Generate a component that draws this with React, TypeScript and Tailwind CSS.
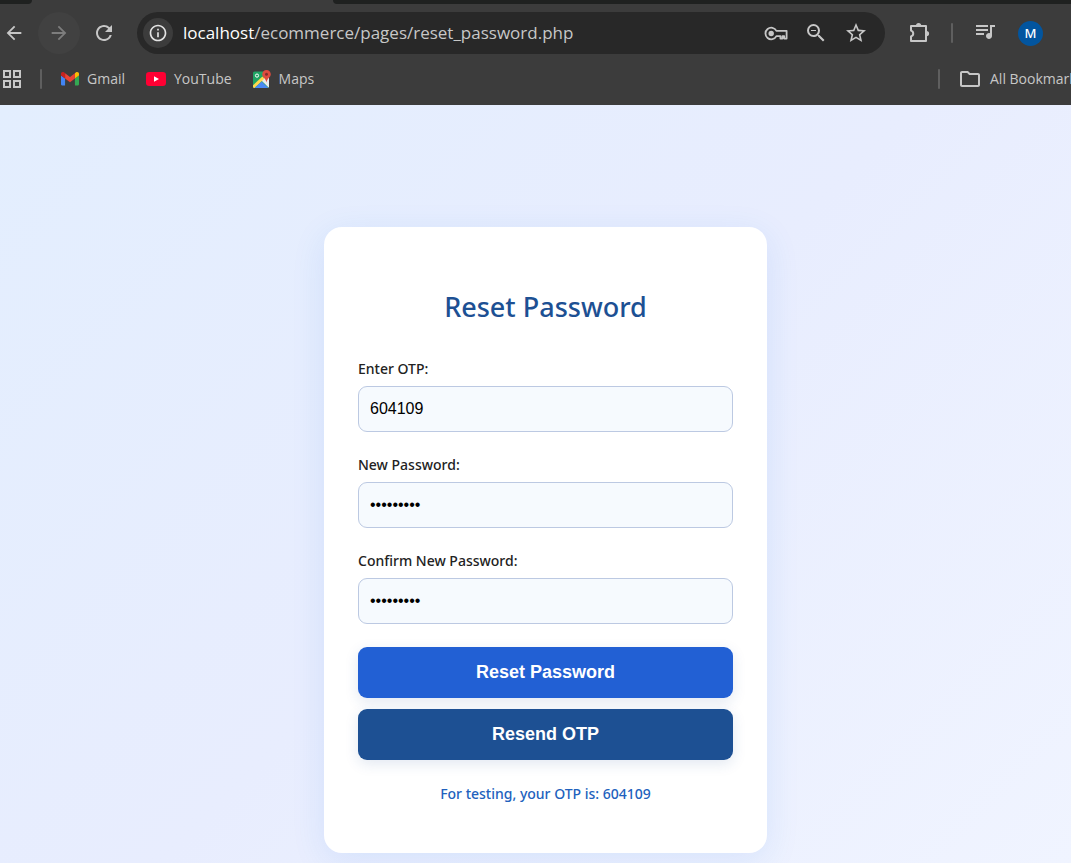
import { useState } from "react";
import {
  MdArrowBack,
  MdArrowForward,
  MdInfoOutline,
  MdOutlineFolder,
  MdQueueMusic,
  MdRefresh,
  MdStarOutline,
  MdZoomOut,
} from "react-icons/md";

function KeyIcon() {
  return (
    <svg viewBox="0 0 24 24" className="size-6" fill="none" stroke="currentColor" strokeWidth="1.8" aria-hidden="true">
      <path d="M12.4 9.8A5.8 5.8 0 1 0 12.4 15.2H16.4V17.6H18.4V15.2H20.2V17.6H22.6V9.8Z" strokeLinejoin="round" />
      <circle cx="7.2" cy="12.5" r="2.7" fill="currentColor" stroke="none" />
    </svg>
  );
}

function ExtensionIcon() {
  return (
    <svg viewBox="0 0 24 24" className="size-6" aria-hidden="true">
      <path
        d="M4 5H19V20H4V15.4A3 3 0 0 0 4 9.6Z"
        fill="none"
        stroke="currentColor"
        strokeWidth="2"
        strokeLinejoin="round"
      />
      <path d="M9 4.6A2.6 2.6 0 0 1 14.2 4.6ZM19.5 10A2.6 2.6 0 0 1 19.5 15.2Z" fill="currentColor" />
    </svg>
  );
}

function AppsIcon() {
  return (
    <svg viewBox="0 0 20 20" className="size-5" fill="none" stroke="currentColor" strokeWidth="2" aria-hidden="true">
      <rect x="2" y="2" width="6" height="6" />
      <rect x="12" y="2" width="6" height="6" />
      <rect x="2" y="12" width="6" height="6" />
      <rect x="12" y="12" width="6" height="6" />
    </svg>
  );
}

function GmailIcon() {
  return (
    <svg viewBox="52 42 88 66" className="w-[18px]" aria-hidden="true">
      <path fill="#4285f4" d="M58 108h14V74L52 59v43c0 3.32 2.69 6 6 6" />
      <path fill="#34a853" d="M120 108h14c3.32 0 6-2.69 6-6V59l-20 15" />
      <path fill="#fbbc04" d="M120 48v26l20-15v-8c0-7.42-8.47-11.65-14.4-7.2" />
      <path fill="#ea4335" d="M72 74V48l24 18 24-18v26L96 92" />
      <path fill="#c5221f" d="M52 51v8l20 15V48l-5.6-4.2c-5.94-4.45-14.4-.22-14.4 7.2" />
    </svg>
  );
}

function YouTubeIcon() {
  return (
    <svg viewBox="0 0 20 14" className="w-5" aria-hidden="true">
      <rect width="20" height="14" rx="3.2" fill="#ff0033" />
      <path d="M8 4.2v5.6L13 7z" fill="#fff" />
    </svg>
  );
}

function MapsIcon() {
  return (
    <svg viewBox="0 0 18 18" className="size-[18px]" aria-hidden="true">
      <defs>
        <clipPath id="map-sheet">
          <rect x="0" y="1.5" width="16" height="16.5" rx="1.5" />
        </clipPath>
      </defs>
      <g clipPath="url(#map-sheet)">
        <rect y="1" width="16" height="17" fill="#1fa463" />
        <path d="M8.2 10.2L16 4V18Z" fill="#e8eaed" />
        <path d="M0 15.2L9.4 6.6L11.6 8.6L1.6 18H0Z" fill="#ffd84d" />
        <path d="M1.6 18L8.6 11.4L15.4 18Z" fill="#4a89f3" />
      </g>
      <circle cx="4" cy="5.6" r="1.6" fill="none" stroke="#fff" strokeWidth="1" />
      <path d="M13.5 0A4.3 4.3 0 0 0 9.2 4.3C9.2 7.4 12.8 8 13.5 12.5C14.2 8 17.8 7.4 17.8 4.3A4.3 4.3 0 0 0 13.5 0Z" fill="#dd4b3e" />
      <circle cx="13.5" cy="4.3" r="1.5" fill="#822f2b" />
    </svg>
  );
}

const bookmarks = [
  { label: "Gmail", icon: <GmailIcon /> },
  { label: "YouTube", icon: <YouTubeIcon /> },
  { label: "Maps", icon: <MapsIcon /> },
];

function BrowserBar() {
  return (
    <header className="bg-[#3c3c3c] font-['Open_Sans','Noto_Sans',sans-serif] text-[#c7c7c7]">
      <div className="flex h-1 justify-between">
        <div className="w-8 rounded-br-full bg-[#1f2120]" />
        <div className="ml-[301px] flex-1 rounded-bl-full bg-[#1f2120]" />
      </div>
      <div className="flex items-center pt-2">
        <button type="button" aria-label="Back" className="flex w-7 shrink-0 justify-center">
          <MdArrowBack className="size-[22px]" />
        </button>
        <button type="button" aria-label="Forward" className="ml-[10px] flex size-[42px] shrink-0 items-center justify-center rounded-full bg-[#414141] text-[#7d7d7d]">
          <MdArrowForward className="size-[22px]" />
        </button>
        <button type="button" aria-label="Reload" className="ml-[3px] flex w-[42px] shrink-0 justify-center">
          <MdRefresh className="size-6" />
        </button>
        <div className="ml-3 flex h-[42px] min-w-0 flex-1 items-center rounded-full bg-[#282828] pl-[6px] pr-[17px]">
          <button type="button" aria-label="Site information" className="flex size-[30px] shrink-0 items-center justify-center rounded-full bg-[#3c3c3c] text-[#e3e3e3]">
            <MdInfoOutline className="size-5" />
          </button>
          <div className="ml-[10px] min-w-0 flex-1 truncate text-[17px] leading-6">
            <span className="text-white">localhost</span>/ecommerce/pages/reset_password.php
          </div>
          <div className="flex shrink-0 items-center gap-4">
            <button type="button" aria-label="Passwords"><KeyIcon /></button>
            <button type="button" aria-label="Zoom"><MdZoomOut className="size-6" /></button>
            <button type="button" aria-label="Bookmark this page"><MdStarOutline className="size-6" /></button>
          </div>
        </div>
        <button type="button" aria-label="Extensions" className="ml-[22px]"><ExtensionIcon /></button>
        <div className="ml-5 h-5 w-[2px] rounded bg-[#5f5f5f]" />
        <button type="button" aria-label="Media controls" className="ml-5 pb-1"><MdQueueMusic className="size-6" /></button>
        <button type="button" aria-label="Profile" className="ml-[21px] mr-7 size-[25px] shrink-0 rounded-full bg-[#02559f] font-['Noto_Sans',sans-serif] text-[13px] font-medium leading-[25px] text-white">M</button>
      </div>
      <nav aria-label="Bookmarks" className="flex items-center pb-4 pt-[15px] text-[14px] leading-5">
        <button type="button" aria-label="Apps" className="ml-[2px]"><AppsIcon /></button>
        <div className="ml-[18px] h-5 w-[2px] rounded bg-[#5f5f5f]" />
        <div className="ml-[19px] flex items-center gap-[21px]">
          {bookmarks.map((b) => (
            <a key={b.label} href="#" className="flex items-center gap-2">
              {b.icon}
              {b.label}
            </a>
          ))}
        </div>
        <div className="ml-auto h-5 w-[2px] rounded bg-[#5f5f5f]" />
        <a href="#" className="ml-[18px] flex w-[113px] shrink-0 items-center gap-2 overflow-hidden whitespace-nowrap">
          <MdOutlineFolder className="-my-[2px] size-6 shrink-0" />
          All Bookmarks
        </a>
      </nav>
    </header>
  );
}

type FieldProps = { id: string; label: string; type: string; initial: string };

function Field({ id, label, type, initial }: FieldProps) {
  const [value, setValue] = useState(initial);
  return (
    <div className="mb-[22px]">
      <label htmlFor={id} className="mb-[6px] block text-[14px] font-medium leading-[22px] text-[#222]">
        {label}
      </label>
      <input
        id={id}
        type={type}
        value={value}
        onChange={(e) => setValue(e.target.value)}
        className="block h-[46px] w-full rounded-[9px] border border-[#bcc9e2] bg-[#f6fafe] px-[11px] font-['Liberation_Sans',Arial,sans-serif] text-[16px] text-black outline-none focus:border-[#2260d4]"
      />
    </div>
  );
}

export default function App() {
  return (
    <div className="flex min-h-screen flex-col font-['Noto_Sans','Open_Sans',sans-serif]">
      <BrowserBar />
      <main className="flex flex-1 justify-center bg-linear-135 from-[#e3eefe] via-[#e8edfe] to-[#f0f4ff] pb-[10px] pl-5 pt-[122px]">
        <form
          onSubmit={(e) => e.preventDefault()}
          className="w-full max-w-[443px] rounded-[18px] bg-white px-[34px] pb-[47px] pt-[62px] shadow-[0_8px_34px_rgba(40,115,225,0.11)]"
        >
          <h1 className="mb-[33px] text-center text-[27px] font-medium leading-9 text-[#1d5093]">Reset Password</h1>
          <Field id="otp" label="Enter OTP:" type="text" initial="604109" />
          <Field id="new-password" label="New Password:" type="password" initial="password1" />
          <Field id="confirm-password" label="Confirm New Password:" type="password" initial="password1" />
          <div className="flex flex-col gap-[11px] pt-px font-['Liberation_Sans',Arial,sans-serif] text-[18px] font-bold text-white">
            <button type="submit" className="h-[51px] rounded-[9px] bg-[#2260d4] shadow-[0_4px_14px_rgba(30,80,150,0.13)]">Reset Password</button>
            <button type="button" className="h-[51px] rounded-[9px] bg-[#1d5093] shadow-[0_4px_14px_rgba(30,80,150,0.13)]">Resend OTP</button>
          </div>
          <p className="mt-[23px] text-center text-[14px] font-medium leading-[22px] text-[#2161bd]">For testing, your OTP is: 604109</p>
        </form>
      </main>
    </div>
  );
}
